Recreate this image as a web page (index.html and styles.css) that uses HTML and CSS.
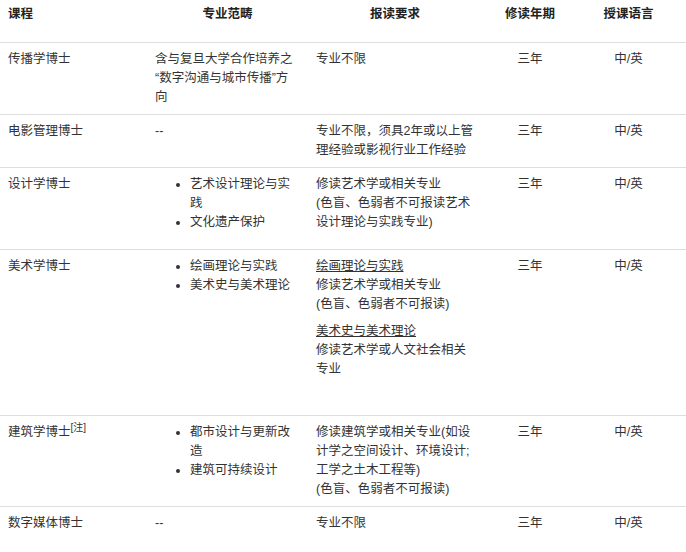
FILE: index.html
```html
<!DOCTYPE html>
<html lang="zh-CN">
<head>
<meta charset="utf-8">
<title>博士课程</title>
<link rel="stylesheet" href="styles.css">
</head>
<body>
<table class="programs">
  <colgroup>
    <col class="c1"><col class="c2"><col class="c3"><col class="c4"><col class="c5">
  </colgroup>
  <thead>
    <tr>
      <th class="left">课程</th>
      <th>专业范畴</th>
      <th>报读要求</th>
      <th>修读年期</th>
      <th class="last">授课语言</th>
    </tr>
  </thead>
  <tbody>
    <tr>
      <td>传播学博士</td>
      <td>含与复旦大学合作培养之“数字沟通与城市传播”方向</td>
      <td>专业不限</td>
      <td class="center">三年</td>
      <td class="center last">中/英</td>
    </tr>
    <tr>
      <td>电影管理博士</td>
      <td>--</td>
      <td>专业不限，须具2年或以上管理经验或影视行业工作经验</td>
      <td class="center">三年</td>
      <td class="center last">中/英</td>
    </tr>
    <tr>
      <td>设计学博士</td>
      <td>
        <ul class="fields">
          <li>艺术设计理论与实践</li>
          <li>文化遗产保护</li>
        </ul>
      </td>
      <td>修读艺术学或相关专业<br>(色盲、色弱者不可报读艺术设计理论与实践专业)</td>
      <td class="center">三年</td>
      <td class="center last">中/英</td>
    </tr>
    <tr>
      <td>美术学博士</td>
      <td>
        <ul class="fields">
          <li>绘画理论与实践</li>
          <li>美术史与美术理论</li>
        </ul>
      </td>
      <td>
        <p class="req"><span class="req-title">绘画理论与实践</span><br>修读艺术学或相关专业<br>(色盲、色弱者不可报读)</p>
        <p class="req req-end"><span class="req-title">美术史与美术理论</span><br>修读艺术学或人文社会相关专业</p>
      </td>
      <td class="center">三年</td>
      <td class="center last">中/英</td>
    </tr>
    <tr>
      <td>建筑学博士<sup class="note">[注]</sup></td>
      <td>
        <ul class="fields">
          <li>都市设计与更新改造</li>
          <li>建筑可持续设计</li>
        </ul>
      </td>
      <td>修读建筑学或相关专业(如设计学之空间设计、环境设计;工学之土木工程等)<br>(色盲、色弱者不可报读)</td>
      <td class="center">三年</td>
      <td class="center last">中/英</td>
    </tr>
    <tr>
      <td>数字媒体博士</td>
      <td>--</td>
      <td>专业不限</td>
      <td class="center">三年</td>
      <td class="center last">中/英</td>
    </tr>
  </tbody>
</table>
</body>
</html>
```
FILE: styles.css
```css
html, body {
  margin: 0;
  padding: 0;
  background: #ffffff;
}

body {
  font-family: "Liberation Sans", "Noto Sans CJK SC", sans-serif;
  font-size: 12.5px;
  line-height: 19px;
  color: #333333;
}

.programs {
  width: 686px;
  table-layout: fixed;
  border-collapse: collapse;
}

.c1 { width: 147px; }
.c2 { width: 161px; }
.c3 { width: 174px; }
.c4 { width: 96px; }
.c5 { width: 108px; }

.programs th {
  font-weight: bold;
  color: #222222;
  text-align: center;
  vertical-align: top;
  padding: 5px 8px 18px;
  border-bottom: 1px solid #dddddd;
}

.programs th.left {
  text-align: left;
}

.programs td {
  vertical-align: top;
  text-align: left;
  padding: 7px 8px;
  border-bottom: 1px solid #dddddd;
}

.programs tbody tr:last-child td {
  border-bottom: none;
}

.programs .center {
  text-align: center;
}

.programs .last {
  padding-right: 15px;
}

.fields {
  margin: 0 0 10px;
  padding-left: 35px;
}

.req {
  margin: 0 0 8px;
}

.req-end {
  margin-bottom: 29px;
}

.req-title {
  text-decoration: underline;
}

.note {
  font-size: 10px;
  line-height: 0;
  vertical-align: 5px;
}
```
